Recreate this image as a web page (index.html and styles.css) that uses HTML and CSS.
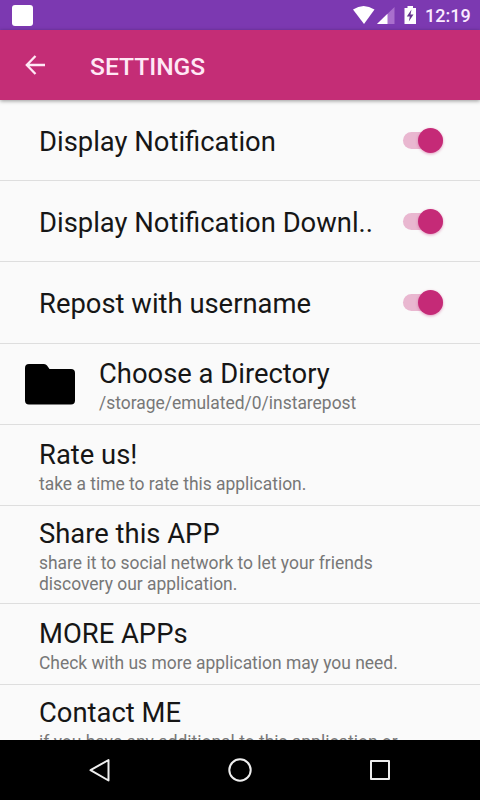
FILE: index.html
```html
<!DOCTYPE html>
<html lang="en">
<head>
<meta charset="utf-8">
<title>Settings</title>
<link rel="stylesheet" href="styles.css">
</head>
<body>
<div class="screen">
  <div class="status">
    <span class="note"></span>
    <svg class="status-icons" width="66" height="30" viewBox="0 0 66 30">
      <path d="M0 9.5Q10.500 2.500 21.500 9.500L11 24Z" fill="#fff"/>
      <path d="M41.500 7V24H24Z" fill="#a96fcd"/>
      <path d="M34.500 13.800V24H24Z" fill="#fff"/>
      <path d="M51.500 8H54.500V6H60V8H63V24H51.500Z" fill="#fff"/>
      <path d="M58.500 9.500L53.800 16.500H56.800L55.800 21.500L60.500 14.500H57.500Z" fill="#67358f"/>
    </svg>
    <span class="clock">12:19</span>
  </div>
  <header class="appbar">
    <svg class="back" width="24" height="24" viewBox="0 0 24 24" fill="none" stroke="#ffe8f5" stroke-width="2.300"><path d="M12.500 3L3.800 12L12.500 21M4 12H22"/></svg>
    <h1>SETTINGS</h1>
  </header>
  <main class="list">
    <div class="row toggle"><span class="title">Display Notification</span><span class="switch"></span></div>
    <div class="row toggle"><span class="title">Display Notification Downl..</span><span class="switch"></span></div>
    <div class="row toggle tall"><span class="title">Repost with username</span><span class="switch"></span></div>
    <div class="row folder-row">
      <svg class="folder" width="50" height="41" viewBox="0 0 50 41"><path d="M4 0H19Q21 0 22 1.500L24.500 5H46Q50 5 50 9V36.500Q50 40.500 46 40.500H4Q0 40.500 0 36.500V4Q0 0 4 0Z"/></svg>
      <div><div class="title">Choose a Directory</div><div class="sub">/storage/emulated/0/instarepost</div></div>
    </div>
    <div class="row"><div class="title">Rate us!</div><div class="sub">take a time to rate this application.</div></div>
    <div class="row share"><div class="title">Share this APP</div><div class="sub">share it to social network to let your friends<br>discovery our application.</div></div>
    <div class="row"><div class="title">MORE APPs</div><div class="sub">Check with us more application may you need.</div></div>
    <div class="row contact"><div class="title">Contact ME</div><div class="sub">if you have any additional to this application or</div></div>
  </main>
  <nav class="navbar">
    <svg width="24" height="26" viewBox="0 0 24 26"><path d="M20.500 3V23.500L2.500 13.200Z"/></svg>
    <svg width="26" height="26" viewBox="0 0 26 26"><circle cx="13" cy="13" r="10.700"/></svg>
    <svg width="24" height="24" viewBox="0 0 24 24"><rect x="3" y="3" width="18" height="18"/></svg>
  </nav>
</div>
</body>
</html>
```
FILE: styles.css
```css
* { box-sizing: border-box; }
body { margin: 0; font-family: Roboto, sans-serif; }
.screen { width: 480px; height: 800px; display: flex; flex-direction: column; background: #fafafa; overflow: hidden; }
.status { height: 30px; flex: none; display: flex; align-items: center; background: #7c39b1; padding: 0 10px 0 12px; }
.note { width: 21px; height: 21px; border-radius: 3px; background: #fff; }
.status-icons { margin-left: auto; margin-right: 6px; }
.clock { color: #fbeaff; font-size: 18px; font-weight: 500; line-height: 30px; padding-top: 2px; width: 45px; white-space: nowrap; }
.appbar { height: 70px; flex: none; display: flex; align-items: center; padding-left: 23px; background: #c42d76; box-shadow: 0 1px 4px rgba(0,0,0,.4); z-index: 1; }
.appbar h1 { margin: 4px 0 0 43px; font-size: 24.600px; font-weight: 500; line-height: 30px; color: #ffe8f5; }
.list { flex: 1; min-height: 0; overflow: hidden; }
.row { height: 81px; padding: 14px 39px 0; border-bottom: 1px solid #dedede; }
.toggle { display: flex; align-items: center; justify-content: space-between; padding: 0 37px 0 39px; }
.toggle .title { padding-top: 4px; }
.tall { height: 82px; }
.toggle.tall .title { padding-top: 2px; }
.title { font-size: 27.400px; line-height: 32px; color: #161616; white-space: nowrap; }
.sub { font-size: 17.450px; line-height: 21px; margin-top: 3px; color: #777; white-space: nowrap; }
.folder-row { display: flex; padding-left: 25px; gap: 24px; }
.folder { margin-top: 6px; }
.share { height: 98px; padding-top: 12px; }
.contact { padding-top: 12px; }
.switch { width: 40px; height: 17px; border-radius: 9px; background: #e9b7d0; display: flex; align-items: center; justify-content: flex-end; }
.switch::after { content: ""; width: 25px; height: 25px; border-radius: 50%; background: #c52a77; box-shadow: 0 1px 3px rgba(197,42,119,.45); }
.navbar { height: 60px; flex: none; display: flex; align-items: center; justify-content: space-between; padding: 0 88px; background: #000; }
.navbar svg { fill: none; stroke: #eee; stroke-width: 2; stroke-linejoin: round; }
```
